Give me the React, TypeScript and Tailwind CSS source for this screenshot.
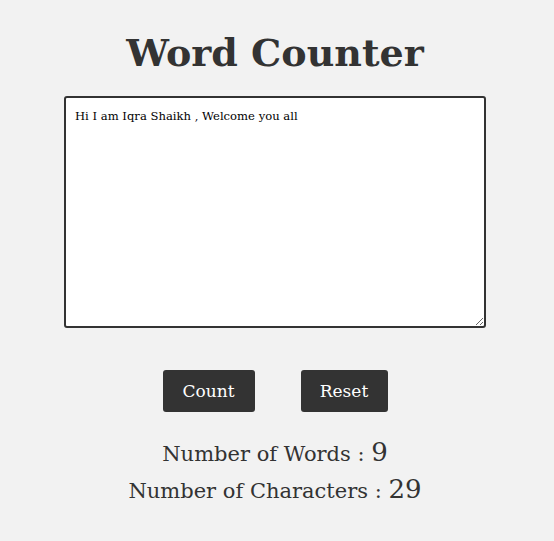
import React, { useState } from "react";

export default function App() {
  const [text, setText] = useState("Hi I am Iqra Shaikh , Welcome you all");
  const [words, setWords] = useState(9);
  const [chars, setChars] = useState(29);
  const count = () => {
    const t = text.trim();
    setWords(t ? t.split(/\s+/).length : 0);
    setChars(text.replace(/\s/g, "").length);
  };
  const reset = () => {
    setText("");
    setWords(0);
    setChars(0);
  };
  return (
    <div className="min-h-[541px] bg-[#f2f2f2] text-[#333] flex flex-col items-center pt-[26px] pr-[4px]" style={{ fontFamily: "'DejaVu Serif', serif" }}>
      <h1 className="text-[38px] font-bold leading-[54px] m-0">Word Counter</h1>
      <textarea
        value={text}
        onChange={(e) => setText(e.target.value)}
        className="mt-[16px] w-[422px] h-[232px] border-2 border-[#333] rounded-[3px] bg-white text-black text-[11.6px] px-[9px] pt-[10px] pb-[9px] leading-[16px] outline-none"
        style={{ fontFamily: "'DejaVu Serif', serif" }}
      />
      <div className="flex gap-[46px] mt-[42px]">
        <button onClick={count} className="w-[92px] h-[42px] bg-[#333] text-white rounded-[3px] text-[17px] pt-[1px]">Count</button>
        <button onClick={reset} className="w-[87px] h-[42px] bg-[#333] text-white rounded-[3px] text-[17px] pt-[1px]">Reset</button>
      </div>
      <div className="mt-[24px] text-[21px] leading-[37px] text-center">
        <div>Number of Words : <span className="text-[26px] leading-none">{words}</span></div>
        <div>Number of Characters : <span className="text-[26px] leading-none">{chars}</span></div>
      </div>
    </div>
  );
}
